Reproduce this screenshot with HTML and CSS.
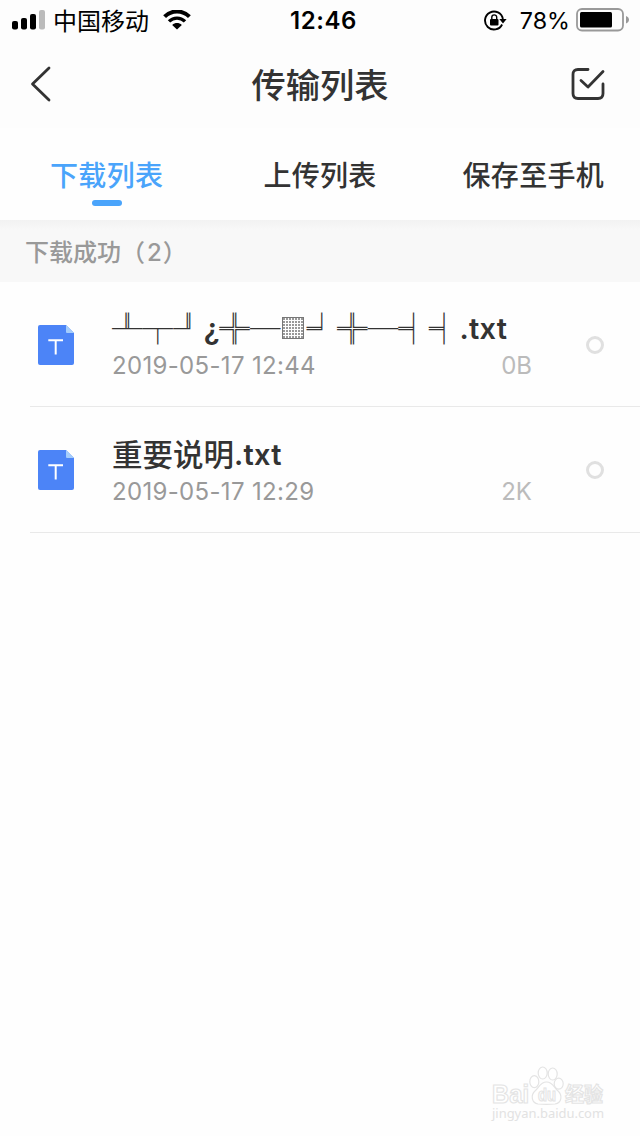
FILE: index.html
```html
<!DOCTYPE html>
<html lang="zh-CN">
<head>
    <meta charset="UTF-8">
    <meta name="viewport" content="width=device-width, initial-scale=1.0">
    <title>传输列表</title>
    <link rel="stylesheet" href="styles.css">
</head>
<body>
    <!-- Status bar -->
    <div class="status-bar">
        <div class="status-left">
            <svg class="signal" width="34" height="22" viewBox="0 0 34 22">
                <rect x="0" y="12" width="6" height="8.5" rx="2"/>
                <rect x="9" y="9" width="6" height="11.5" rx="2"/>
                <rect x="18" y="5" width="6" height="15.5" rx="2"/>
                <rect x="27" y="1" width="6" height="19.5" rx="2" fill="#bbb"/>
            </svg>
            <span class="carrier">中国移动</span>
            <svg class="wifi" width="28" height="20" viewBox="0 0 28 20">
                <path d="M1.6 6.7 C8.5 -.3 19.5 -.3 26.4 6.7" fill="none" stroke="#000" stroke-width="4"/>
                <path d="M6 11.4 C10.5 7 17.5 7 22 11.4" fill="none" stroke="#000" stroke-width="3.4"/>
                <path d="M14 19.6 L9.2 14.9 C12 12.5 16 12.5 18.8 14.9 Z"/>
            </svg>
        </div>
        <div class="clock">12:46</div>
        <div class="status-right">
            <svg class="lock" width="23" height="21" viewBox="0 0 23 21">
                <path d="M18.1 14.5 A9 9 0 1 1 18.9 9" fill="none" stroke="#000" stroke-width="1.9"/>
                <path d="M15.3 9 L22.6 9 L19 13.4 Z"/>
                <rect x="6" y="9" width="8.5" height="6.6" rx="1"/>
                <path d="M7.8 9.5 V7.3 a2.45 2.45 0 0 1 4.9 0 V9.5" fill="none" stroke="#000" stroke-width="1.4"/>
            </svg>
            <span class="percent">78%</span>
            <svg class="battery" width="54" height="24" viewBox="0 0 54 24">
                <rect x="1" y="1" width="46" height="21.5" rx="5" fill="none" stroke="#999" stroke-width="1.8"/>
                <rect x="4" y="4" width="32" height="15.5" rx="1.5"/>
                <path d="M50 8 C54 9.5 54 14 50 15.5 Z" fill="#999"/>
            </svg>
        </div>
    </div>

    <!-- Title -->
    <div class="header">
        <svg class="back" width="22" height="36" viewBox="0 0 22 36">
            <path d="M19 2 L2.5 18 L19 34" fill="none" stroke="#333" stroke-width="2.8" stroke-linecap="round" stroke-linejoin="round"/>
        </svg>
        <h1>传输列表</h1>
        <svg class="select" width="34" height="34" viewBox="0 0 34 34">
            <path d="M17 2.5 H7 Q2 2.5 2 7.5 V26.5 Q2 31.5 7 31.5 H27 Q32 31.5 32 26.5 V17" fill="none" stroke="#333" stroke-width="2.8" stroke-linecap="round"/>
            <path d="M10 13.5 L17 20 L32 4.5" fill="none" stroke="#333" stroke-width="2.8" stroke-linecap="round" stroke-linejoin="round"/>
        </svg>
    </div>

    <!-- Tabs -->
    <div class="tabs">
        <div class="tab active">下载列表</div>
        <div class="tab">上传列表</div>
        <div class="tab">保存至手机</div>
    </div>

    <div class="section-title">下载成功（<b>2</b>）</div>

    <!-- Downloaded files -->
    <div class="file">
        <svg class="file-icon" width="36" height="40" viewBox="0 0 36 40">
            <path d="M2 0 H28 L36 8 V38 Q36 40 34 40 H2 Q0 40 0 38 V2 Q0 0 2 0 Z" fill="#4c84f7"/>
            <path d="M28 0 L36 8 H29 Q28 8 28 7 Z" fill="#a5cdfb"/>
            <path d="M10.3 15.2 H25 M17.7 15.2 V29.5" fill="none" stroke="#fff" stroke-width="2"/>
        </svg>
        <div class="file-info">
            <div class="file-name"><span class="box">╨</span><span class="box">┬</span><span class="box">╜</span><span class="mark">¿</span><span class="box">╬</span><span class="box">─</span><span class="shade"></span><span class="box">╛</span><span class="box">╬</span><span class="box">─</span><span class="box">╡</span><span class="box">╡</span><span class="ext">.txt</span></div>
            <div class="file-meta">
                <span>2019-05-17 12:44</span>
                <span class="size">0B</span>
            </div>
        </div>
        <span class="radio"></span>
    </div>
    <div class="file">
        <svg class="file-icon" width="36" height="40" viewBox="0 0 36 40">
            <path d="M2 0 H28 L36 8 V38 Q36 40 34 40 H2 Q0 40 0 38 V2 Q0 0 2 0 Z" fill="#4c84f7"/>
            <path d="M28 0 L36 8 H29 Q28 8 28 7 Z" fill="#a5cdfb"/>
            <path d="M10.3 15.2 H25 M17.7 15.2 V29.5" fill="none" stroke="#fff" stroke-width="2"/>
        </svg>
        <div class="file-info">
            <div class="file-name">重要说明<span class="ext">.txt</span></div>
            <div class="file-meta">
                <span>2019-05-17 12:29</span>
                <span class="size">2K</span>
            </div>
        </div>
        <span class="radio"></span>
    </div>

    <!-- Watermark -->
    <svg class="watermark" width="120" height="66" viewBox="0 0 120 66">
        <g fill="#fff" stroke="#e4e4e4" stroke-width="1.2">
            <ellipse cx="47.3" cy="20.7" rx="4.5" ry="6"/>
            <ellipse cx="55.7" cy="12" rx="4.5" ry="6"/>
            <ellipse cx="65.7" cy="13" rx="4.5" ry="6"/>
            <ellipse cx="71.7" cy="22.7" rx="4.5" ry="5.5"/>
            <path d="M59.5 21 C53 21 52 27 48 30 C43.5 34 44.5 42 51 43 C56 43.5 63 43.5 68 43 C75 42 75.5 34 71 30 C67 27 66 21 59.5 21 Z"/>
            <text class="wm-bai" x="5" y="41.7" textLength="37" lengthAdjust="spacingAndGlyphs">Bai</text>
            <text class="wm-du" x="51" y="39.7" textLength="18" lengthAdjust="spacingAndGlyphs">du</text>
            <text class="wm-cn" x="78" y="41" textLength="38" lengthAdjust="spacingAndGlyphs">经验</text>
        </g>
        <text class="wm-url" x="5" y="57" textLength="112" lengthAdjust="spacingAndGlyphs">jingyan.baidu.com</text>
    </svg>
</body>
</html>
```

FILE: styles.css
```css
* {
    box-sizing: border-box;
}
body {
    display: flex;
    flex-direction: column;
    height: 1136px;
    width: 640px;
    margin: 0;
    background: #fefefe;
    color: #333;
    font-family: Inter, "Noto Sans CJK SC", sans-serif;
    overflow: hidden;
}
.status-bar {
    display: grid;
    grid-template-columns: 1fr auto 1fr;
    align-items: center;
    height: 40px;
    padding: 0 10px 0 12px;
    color: #000;
    font-size: 24px;
    background: #fdfdfd;
}
.status-left, .status-right {
    display: flex;
    align-items: center;
}
.status-right {
    justify-content: flex-end;
}
.carrier {
    margin: -2px 14px 0 7px;
}
.clock {
    padding-left: 5px;
    font-size: 24px;
    font-weight: 600;
    letter-spacing: 0.6px;
}
.percent {
    margin: 1px 6px 0 13px;
    font-size: 23.3px;
}
.header {
    display: flex;
    justify-content: space-between;
    align-items: center;
    height: 88px;
    padding: 0 35px 0 30px;
    background: #fdfdfd;
}
h1 {
    margin: -3px 0 0 17px;
    font-size: 34.3px;
    font-weight: 500;
}
.tabs {
    display: flex;
    height: 92px;
    background: #fefefe;
}
.tab {
    display: flex;
    flex-direction: column;
    flex: 1;
    align-items: center;
    padding-top: 28px;
    font-size: 28px;
    font-weight: 500;
    line-height: 40px;
    letter-spacing: 0.3px;
}
.tab.active {
    color: #4aa4fb;
}
.tab.active::after {
    content: "";
    width: 30px;
    height: 6px;
    margin-top: 4px;
    border-radius: 3px;
    background: #4aa4fb;
}
.section-title {
    height: 62px;
    padding-left: 25px;
    background: linear-gradient(#f2f2f2, #f8f8f8 10px);
    color: #999;
    font-size: 24px;
    font-weight: 500;
    line-height: 65px;
}
.section-title b {
    margin: 0 1px 0 2px;
    font-weight: 500;
}
.file {
    display: flex;
    align-items: center;
    height: 125px;
    margin-left: 30px;
    padding: 2px 36px 0 8px;
    border-bottom: 1px solid #e9e9e9;
}
.file-info {
    width: 420px;
    margin: 0 0 3px 38px;
}
.file + .file {
    height: 126px;
    padding-top: 0;
}
.file + .file .file-info {
    margin-bottom: -1px;
}
.file-name {
    display: flex;
    height: 44px;
    font-size: 30.5px;
    font-weight: 500;
    line-height: 44px;
    white-space: nowrap;
}
.box {
    width: 30.6px;
    margin-top: -2px;
    font-family: "Noto Sans CJK SC", sans-serif;
    font-weight: 300;
}
.shade {
    width: 22px;
    height: 22px;
    margin: 10px 2px 0;
    border: 1px solid #777;
    background:
        repeating-linear-gradient(90deg, transparent 0 2px, #fefefe 2px 3px),
        repeating-linear-gradient(#999 0 2px, #fefefe 2px 3px);
}
.mark {
    width: 15.5px;
    font-weight: 600;
    font-size: 29px;
}
.ext {
    font-size: 29px;
    font-weight: 600;
    letter-spacing: 0.3px;
}
.file-meta {
    display: flex;
    justify-content: space-between;
    height: 30px;
    color: #999;
    font-size: 24px;
    line-height: 30px;
    letter-spacing: 0.33px;
}
.size {
    color: #bbb;
    letter-spacing: 0;
}
.radio {
    width: 18px;
    height: 18px;
    margin-left: auto;
    border: 3px solid #e0e0e0;
    border-radius: 50%;
}
.watermark {
    margin: auto 33px 9px auto;
    overflow: visible;
}
.wm-bai, .wm-du {
    font: bold 26px "Liberation Sans", sans-serif;
}
.wm-du {
    font-size: 18px;
}
.wm-cn {
    font: bold 20px "Noto Sans CJK SC", sans-serif;
}
.wm-url {
    fill: #e2e2e2;
    font: 13px "Noto Sans", sans-serif;
}
```
